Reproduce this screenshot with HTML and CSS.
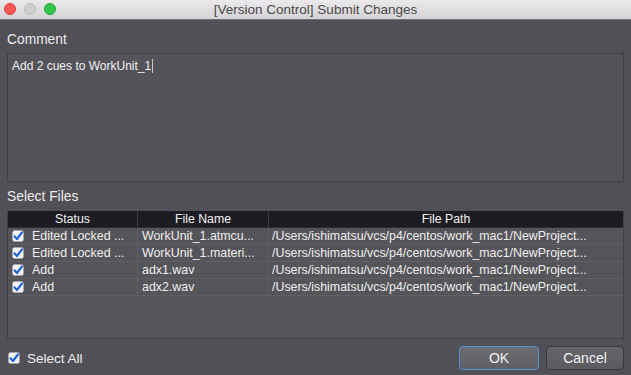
FILE: index.html
```html
<!DOCTYPE html>
<html>
<head>
<meta charset="utf-8">
<link rel="stylesheet" href="styles.css">
</head>
<body>
<div class="window">
  <div class="titlebar">
    <div class="lights">
      <span class="light red"></span>
      <span class="light gray"></span>
      <span class="light green"></span>
    </div>
    <div class="title">[Version Control] Submit Changes</div>
  </div>
  <div class="content">
    <div class="label label-comment">Comment</div>
    <div class="comment-box"><span class="comment-text">Add 2 cues to WorkUnit_1</span><span class="caret"></span></div>
    <div class="label label-files">Select Files</div>
    <div class="table">
      <div class="row head">
        <div class="cell">Status</div>
        <div class="cell">File Name</div>
        <div class="cell">File Path</div>
      </div>
      <div class="row">
        <div class="cell status"><svg class="cb" viewBox="0 0 12 12"><rect x="0.5" y="0.5" width="11" height="11" rx="2" class="cb-box"/><path d="M2.6 6.4 L5 9 L10 2.3" class="cb-check"/></svg>Edited Locked ...</div>
        <div class="cell">WorkUnit_1.atmcu...</div>
        <div class="cell path">/Users/ishimatsu/vcs/p4/centos/work_mac1/NewProject...</div>
      </div>
      <div class="row">
        <div class="cell status"><svg class="cb" viewBox="0 0 12 12"><rect x="0.5" y="0.5" width="11" height="11" rx="2" class="cb-box"/><path d="M2.6 6.4 L5 9 L10 2.3" class="cb-check"/></svg>Edited Locked ...</div>
        <div class="cell">WorkUnit_1.materi...</div>
        <div class="cell path">/Users/ishimatsu/vcs/p4/centos/work_mac1/NewProject...</div>
      </div>
      <div class="row">
        <div class="cell status"><svg class="cb" viewBox="0 0 12 12"><rect x="0.5" y="0.5" width="11" height="11" rx="2" class="cb-box"/><path d="M2.6 6.4 L5 9 L10 2.3" class="cb-check"/></svg>Add</div>
        <div class="cell">adx1.wav</div>
        <div class="cell path">/Users/ishimatsu/vcs/p4/centos/work_mac1/NewProject...</div>
      </div>
      <div class="row">
        <div class="cell status"><svg class="cb" viewBox="0 0 12 12"><rect x="0.5" y="0.5" width="11" height="11" rx="2" class="cb-box"/><path d="M2.6 6.4 L5 9 L10 2.3" class="cb-check"/></svg>Add</div>
        <div class="cell">adx2.wav</div>
        <div class="cell path">/Users/ishimatsu/vcs/p4/centos/work_mac1/NewProject...</div>
      </div>
    </div>
    <div class="footer">
      <label class="select-all"><svg class="cb" viewBox="0 0 12 12"><rect x="0.5" y="0.5" width="11" height="11" rx="2" class="cb-box"/><path d="M2.6 6.4 L5 9 L10 2.3" class="cb-check"/></svg>Select All</label>
      <div class="buttons">
        <button class="btn ok">OK</button>
        <button class="btn cancel">Cancel</button>
      </div>
    </div>
  </div>
</div>
</body>
</html>
```
FILE: styles.css
```css
* { box-sizing: border-box; }
html, body {
  margin: 0;
  padding: 0;
  width: 631px;
  height: 375px;
  overflow: hidden;
  background: #515056;
  font-family: "Liberation Sans", Arial, sans-serif;
  color: #ececec;
}
.window {
  width: 631px;
  height: 375px;
  display: flex;
  flex-direction: column;
}
.titlebar {
  height: 20px;
  flex: none;
  display: flex;
  align-items: center;
  justify-content: center;
  background: linear-gradient(#ebe9eb, #d4d2d4);
  border-bottom: 1px solid #737276;
  position: relative;
}
.lights {
  position: absolute;
  left: 4px;
  top: 3px;
  display: flex;
  gap: 8px;
}
.light {
  width: 12px;
  height: 12px;
  border-radius: 50%;
  display: block;
}
.light.red { background: #fc5753; border: 0.5px solid #df3d39; }
.light.gray { background: #cfcdcf; border: 0.5px solid #bdbbbd; }
.light.green { background: #34c84a; border: 0.5px solid #20a934; }
.title {
  font-size: 13.5px;
  color: #4a4a4a;
  line-height: 16px;
}
.content {
  flex: 1;
  display: flex;
  flex-direction: column;
  padding: 0 7px;
}
.label {
  font-size: 13.8px;
  line-height: 16px;
  height: 16px;
  color: #ededed;
}
.label-comment { margin-top: 12px; }
.comment-box {
  margin-top: 5px;
  height: 129px;
  background: #545359;
  border: 1px solid #403f44;
  padding: 4px 4px;
  font-size: 12px;
  line-height: 16px;
  display: flex;
  align-items: flex-start;
}
.comment-text { color: #f0f0f0; }
.caret {
  display: inline-block;
  width: 1px;
  height: 14px;
  margin-top: 1px;
  margin-left: 1px;
  background: #c8c8c8;
}
.label-files { margin-top: 7px; }
.table {
  margin-top: 6px;
  height: 128px;
  background: #555459;
  border: 1px solid #414045;
  border-top: none;
  display: flex;
  flex-direction: column;
}
.row {
  display: grid;
  grid-template-columns: 130px 131px 1fr;
  height: 17px;
  border-bottom: 1px solid #605f64;
  font-size: 12.4px;
  line-height: 16px;
  white-space: nowrap;
  overflow: hidden;
}
.row .cell {
  border-right: 1px solid #616065;
  padding-left: 4px;
  display: flex;
  align-items: center;
  overflow: hidden;
  color: #efefef;
}
.row .cell:last-child { border-right: none; }
.row .cell.path { padding-left: 3px; }
.row.head {
  background: #1d1c22;
  border-bottom: 1px solid #2b2a30;
  font-size: 12.3px;
}
.row.head .cell {
  justify-content: center;
  padding-left: 0;
  border-right: 1px solid #3c3b41;
  color: #f2f2f2;
}
.row.head .cell:last-child { border-right: none; }
.cb {
  width: 12px;
  height: 12px;
  flex: none;
  margin-right: 8px;
}
.cb-box {
  fill: #f4f4f6;
  stroke: #a9a9b0;
  stroke-width: 0.6;
}
.cb-check {
  fill: none;
  stroke: #1f63d6;
  stroke-width: 2.2;
  stroke-linecap: round;
  stroke-linejoin: round;
}
.footer {
  margin-top: 7px;
  height: 24px;
  display: flex;
  align-items: center;
  justify-content: space-between;
}
.select-all {
  display: flex;
  align-items: center;
  font-size: 13.5px;
  margin-left: 1px;
  color: #efefef;
}
.select-all .cb { margin-right: 7px; }
.buttons {
  display: flex;
  gap: 7px;
}
.btn {
  font-family: "Liberation Sans", Arial, sans-serif;
  font-size: 14px;
  color: #f2f2f2;
  height: 24px;
  border-radius: 4px;
  padding: 0;
  line-height: 20px;
}
.btn.ok {
  width: 80px;
  background: linear-gradient(#6c6c72, #5f5f65);
  border: 1px solid #5a8ed6;
}
.btn.cancel {
  width: 78px;
  background: linear-gradient(#646469, #5b5b60);
  border: 1px solid #38373c;
}
```
